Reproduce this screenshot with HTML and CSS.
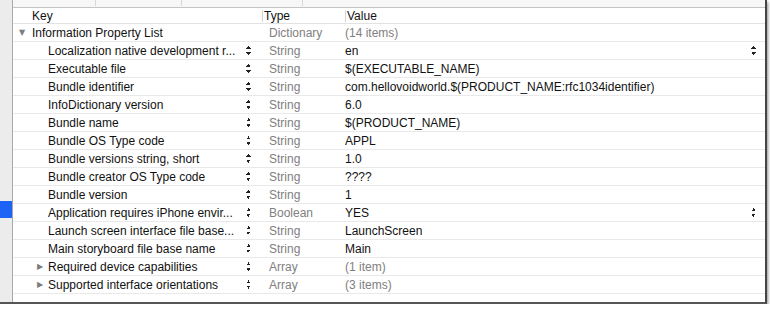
FILE: index.html
```html
<!DOCTYPE html>
<html lang="en">
<head>
    <meta charset="UTF-8">
    <title>Info.plist</title>
    <link rel="stylesheet" href="styles.css">
</head>
<body>
    <div class="window">
        <!-- left navigator strip -->
        <div class="sidebar">
            <div class="selected"></div>
        </div>

        <div class="main">
            <div class="toolbar">
                <span class="tick t1"></span>
                <span class="tick t2"></span>
                <span class="tick t3"></span>
            </div>

            <!-- column headers -->
            <div class="row head">
                <div class="key"><span class="label">Key</span></div>
                <div class="type">Type</div>
                <div class="value">Value</div>
            </div>

            <div class="row root">
                <div class="key"><span class="disclose open">&#9660;</span><span class="label">Information Property List</span></div>
                <div class="type">Dictionary</div>
                <div class="value dim">(14 items)</div>
            </div>

            <div class="row">
                <div class="key child"><span class="label">Localization native development r...</span><span class="stepper"></span></div>
                <div class="type">String</div>
                <div class="value">en<span class="popup"></span></div>
            </div>
            <div class="row">
                <div class="key child"><span class="label">Executable file</span><span class="stepper"></span></div>
                <div class="type">String</div>
                <div class="value">$(EXECUTABLE_NAME)</div>
            </div>
            <div class="row">
                <div class="key child"><span class="label">Bundle identifier</span><span class="stepper"></span></div>
                <div class="type">String</div>
                <div class="value">com.hellovoidworld.$(PRODUCT_NAME:rfc1034identifier)</div>
            </div>
            <div class="row">
                <div class="key child"><span class="label">InfoDictionary version</span><span class="stepper"></span></div>
                <div class="type">String</div>
                <div class="value">6.0</div>
            </div>
            <div class="row">
                <div class="key child"><span class="label">Bundle name</span><span class="stepper"></span></div>
                <div class="type">String</div>
                <div class="value">$(PRODUCT_NAME)</div>
            </div>
            <div class="row">
                <div class="key child"><span class="label">Bundle OS Type code</span><span class="stepper"></span></div>
                <div class="type">String</div>
                <div class="value">APPL</div>
            </div>
            <div class="row">
                <div class="key child"><span class="label">Bundle versions string, short</span><span class="stepper"></span></div>
                <div class="type">String</div>
                <div class="value">1.0</div>
            </div>
            <div class="row">
                <div class="key child"><span class="label">Bundle creator OS Type code</span><span class="stepper"></span></div>
                <div class="type">String</div>
                <div class="value">????</div>
            </div>
            <div class="row">
                <div class="key child"><span class="label">Bundle version</span><span class="stepper"></span></div>
                <div class="type">String</div>
                <div class="value">1</div>
            </div>
            <div class="row">
                <div class="key child"><span class="label">Application requires iPhone envir...</span><span class="stepper"></span></div>
                <div class="type">Boolean</div>
                <div class="value">YES<span class="popup"></span></div>
            </div>
            <div class="row">
                <div class="key child"><span class="label">Launch screen interface file base...</span><span class="stepper"></span></div>
                <div class="type">String</div>
                <div class="value">LaunchScreen</div>
            </div>
            <div class="row">
                <div class="key child"><span class="label">Main storyboard file base name</span><span class="stepper"></span></div>
                <div class="type">String</div>
                <div class="value">Main</div>
            </div>
            <div class="row">
                <div class="key child"><span class="disclose">&#9654;</span><span class="label">Required device capabilities</span><span class="stepper"></span></div>
                <div class="type">Array</div>
                <div class="value dim">(1 item)</div>
            </div>
            <div class="row">
                <div class="key child"><span class="disclose">&#9654;</span><span class="label">Supported interface orientations</span><span class="stepper"></span></div>
                <div class="type">Array</div>
                <div class="value dim">(3 items)</div>
            </div>
        </div>
    </div>
</body>
</html>
```

FILE: styles.css
```css
*{
    margin: 0;
    padding: 0;
    box-sizing: border-box;
}
body{
    background: #fff;
    font-family: "Liberation Sans", Arial, sans-serif;
    font-size: 12px;
    color: #111;
}
.window{
    width: 767px;
    height: 304px;
    display: flex;
    background: #fff;
    border-right: 2px solid #444;
    border-bottom: 2px solid #555;
    box-shadow: 1px 2px 3px rgba(0,0,0,0.45);
}
.sidebar{
    width: 13px;
    flex: none;
    background: #ececec;
    border-right: 1px solid #a9a9a9;
}
.selected{
    margin-top: 201px;
    height: 17px;
    background: #1d63f6;
}
.main{
    flex: 1;
    display: flex;
    flex-direction: column;
}
.toolbar{
    height: 8px;
    background: #f7f7f7;
    border-bottom: 1px solid #c4c4c4;
    display: flex;
}
.tick{
    width: 1px;
    height: 6px;
    background: #d8d8d8;
}
.t1{ margin-left: 82px; }
.t2{ margin-left: 85px; }
.t3{ margin-left: 120px; }

/* table rows */
.row{
    display: grid;
    grid-template-columns: 250px 82px 1fr;
    height: 18px;
    align-items: center;
    border-bottom: 1px solid #e9e9e9;
}
.row.head{
    height: 16px;
    border-bottom: 1px solid #e2e2e2;
}
.key{
    display: flex;
    align-items: center;
    padding-left: 19px;
    padding-right: 12px;
    height: 100%;
}
.key.child{
    padding-left: 35px;
}
.label{
    flex: 1;
    white-space: nowrap;
    overflow: hidden;
}
.disclose{
    width: 11px;
    margin-left: -11px;
    color: #7d7d7d;
    font-size: 8px;
    font-family: "DejaVu Sans", sans-serif;
}
.root .disclose{
    margin-left: -13px;
    width: 13px;
}
.type{
    color: #808080;
    padding-left: 6px;
}
.head .type,.head .value{
    color: #111;
    border-left: 1px solid #d4d4d4;
    height: 12px;
    line-height: 12px;
    padding-left: 1px;
}
.head .type{
    margin-left: -1px;
}
.value{
    display: flex;
    align-items: center;
    padding-right: 9px;
}
.value.dim{
    color: #808080;
}
.stepper,.popup{
    width: 5px;
    height: 11px;
    flex: none;
    background:
        linear-gradient(to bottom right, transparent 50%, #222 50%) left 1px / 3px 3px no-repeat,
        linear-gradient(to bottom left, transparent 50%, #222 50%) 2px 1px / 3px 3px no-repeat,
        linear-gradient(to top right, transparent 50%, #222 50%) left 7px / 3px 3px no-repeat,
        linear-gradient(to top left, transparent 50%, #222 50%) 2px 7px / 3px 3px no-repeat;
}
.popup{
    margin-left: auto;
}
```
